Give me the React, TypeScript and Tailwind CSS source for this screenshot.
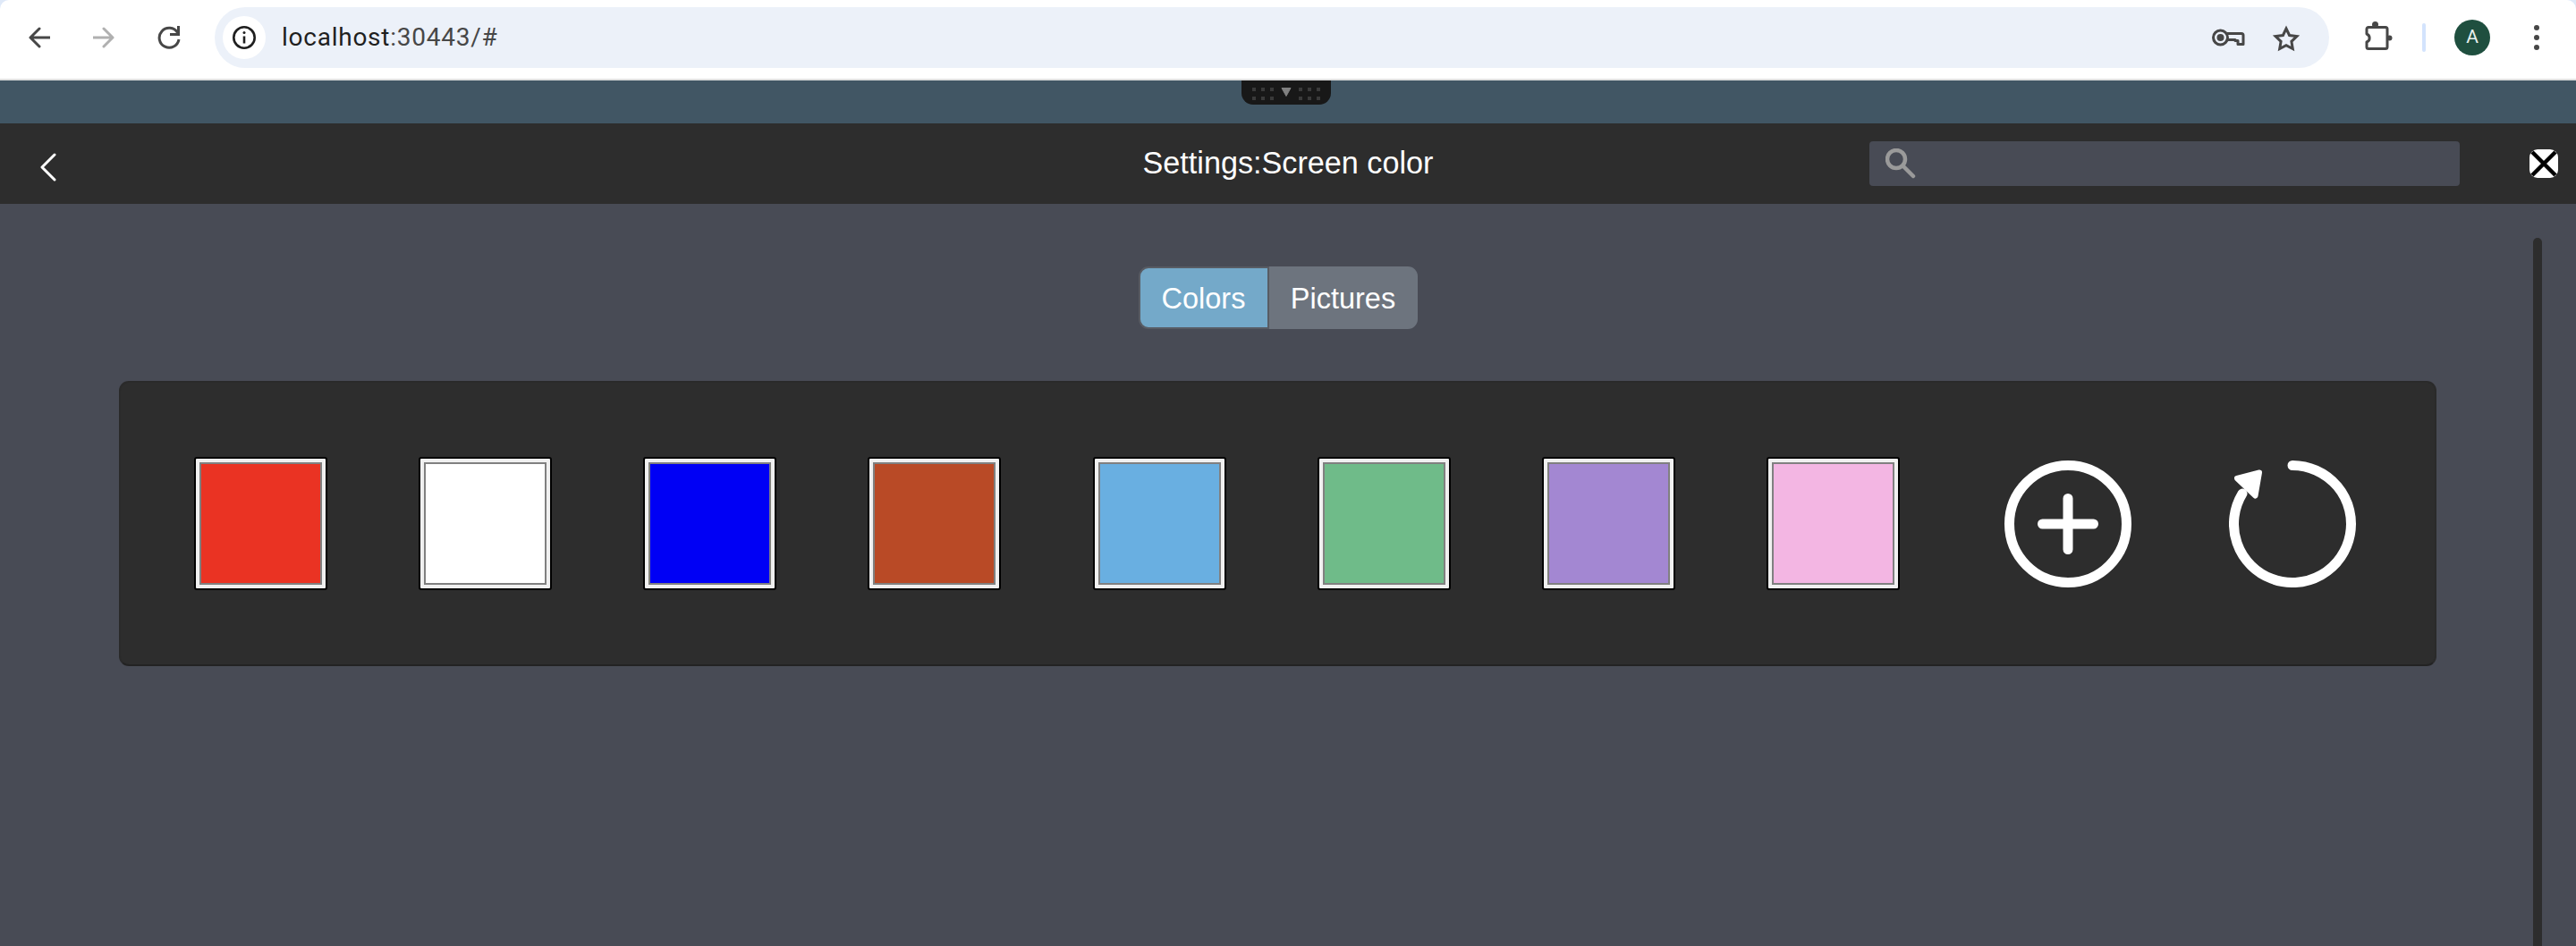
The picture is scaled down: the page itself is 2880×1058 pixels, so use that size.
const swatches = ["#ea3323", "#ffffff", "#0000f5", "#b94a26", "#69afe1", "#6fbb89", "#a387d2", "#f3b6e3"];

function BrowserBar() {
  return (
    <div className="h-[90px] shrink-0 bg-[#dfe9f8]">
      <div className="h-[90px] rounded-t-[10px] border-b-2 border-[#e0e0e0] bg-white">
        <div className="flex h-[84px] w-full items-center">
          <svg width="24" height="24" viewBox="0 0 24 24" fill="none" stroke="#474747" strokeWidth="3" strokeLinecap="round" strokeLinejoin="round" className="ml-[32px]">
            <path d="M24 12H2M12 2 2 12l10 10" />
          </svg>
          <svg width="24" height="24" viewBox="0 0 24 24" fill="none" stroke="#b0b0b0" strokeWidth="3" strokeLinecap="round" strokeLinejoin="round" className="ml-[48px]">
            <path d="M0 12h22M12 2l10 10-10 10" />
          </svg>
          <svg width="26" height="26" viewBox="0 0 26 26" fill="none" stroke="#474747" strokeWidth="3" className="ml-[48px]">
            <path d="M22.500 7.500A11 11 0 1 0 24 15" />
            <path d="M23.500 0v9.500H14" />
          </svg>
          <div className="ml-[38px] flex h-[68px] w-[2364px] items-center rounded-full bg-[#ecf1f9] pl-[9px]">
            <div className="flex h-[48px] w-[48px] items-center justify-center rounded-full bg-white">
              <svg width="28" height="28" viewBox="0 0 28 28" fill="none" stroke="#1f1f1f" strokeWidth="2.600">
                <circle cx="14" cy="14" r="11.700" />
                <path d="M14 12.500v8" />
                <circle cx="14" cy="8.500" r="1.500" fill="#1f1f1f" stroke="none" />
              </svg>
            </div>
            <span className="ml-[18px] font-['Roboto',sans-serif] text-[28px] tracking-[0.75px] text-[#474747]">
              <span className="text-[#1f1f1f]">localhost</span>:30443/#
            </span>
            <svg width="38" height="22" viewBox="0 0 38 22" fill="none" stroke="#474747" strokeWidth="3" strokeLinejoin="round" className="ml-auto">
              <circle cx="10.500" cy="11" r="8" />
              <circle cx="10.500" cy="11" r="4" fill="#474747" stroke="none" />
              <path d="M18 6.500h16a2 2 0 0 1 2 2v10h-6v-4h-3v-1H18" />
            </svg>
            <svg width="32" height="31" viewBox="0 0 32 31" fill="none" stroke="#474747" strokeWidth="3" className="ml-[30px] mr-[32px]">
              <path d="M16 5 19.600 12.500 27.900 13.600 21.900 19.400 23.300 27.600 16 23.700 8.700 27.600 10.100 19.400 4.100 13.600 12.400 12.500z" />
            </svg>
          </div>
          <svg width="36" height="36" viewBox="0 0 36 36" fill="none" stroke="#474747" strokeWidth="3" strokeLinejoin="round" className="ml-[38px]">
            <path d="M6 6.500H25a2 2 0 0 1 2 2V28.500a2 2 0 0 1-2 2H6a2 2 0 0 1-2-2V23a4.800 4.800 0 0 0 0-9V8.500a2 2 0 0 1 2-2z" />
            <circle cx="13.500" cy="3.500" r="3.500" fill="#474747" stroke="none" />
            <circle cx="29.500" cy="18.500" r="3" fill="#474747" stroke="none" />
          </svg>
          <div className="ml-[30px] h-[32px] w-[4px] rounded-full bg-[#d3e3fd]" />
          <div className="ml-[32px] flex h-[40px] w-[40px] items-center justify-center rounded-full bg-[#1f4f3f] font-['Roboto',sans-serif] text-[21px] text-[#e8f0ee]">A</div>
          <div className="ml-[49px] flex flex-col gap-[5px]">
            <span className="h-[6px] w-[6px] rounded-full bg-[#474747]" />
            <span className="h-[6px] w-[6px] rounded-full bg-[#474747]" />
            <span className="h-[6px] w-[6px] rounded-full bg-[#474747]" />
          </div>
        </div>
      </div>
    </div>
  );
}

function DockHandle() {
  return (
    <div className="flex h-[48px] shrink-0 justify-center bg-[#415664]">
      <div className="ml-[-4px] flex h-[27px] w-[100px] items-start justify-center gap-[6px] rounded-b-[13px] bg-[#181818] pt-[8px]">
        <Dots />
        <svg width="12" height="10" viewBox="0 0 12 10" className="mx-[2px]">
          <path d="M1 0.500h10L6 9.500z" fill="#808080" stroke="#808080" strokeLinejoin="round" />
        </svg>
        <Dots />
      </div>
    </div>
  );
}

function Dots() {
  return (
    <div className="grid grid-cols-3 gap-x-[6px] gap-y-[6px]">
      {[0, 1, 2, 3, 4, 5].map((i) => (
        <span key={i} className="h-[4px] w-[4px] bg-[#3a3a3a]" />
      ))}
    </div>
  );
}

function Header() {
  return (
    <div className="grid h-[90px] shrink-0 grid-cols-[1fr_auto_1fr] items-center bg-[#2d2d2d] font-['Liberation_Sans',Arial,sans-serif]">
      <div className="pl-[44px] pt-[8px]">
        <svg width="20" height="32" viewBox="0 0 20 32" fill="none" stroke="#ffffff" strokeWidth="3" strokeLinecap="round" strokeLinejoin="round" className="block">
          <path d="M17 2 3 16l14 14" />
        </svg>
      </div>
      <div className="text-[34.2px] text-white">Settings:Screen color</div>
      <div className="flex items-center justify-end pr-[20px]">
        <div className="flex h-[50px] w-[660px] items-center rounded-[4px] bg-[#484b55] pl-[18px]">
          <svg width="34" height="34" viewBox="0 0 34 34" fill="none" stroke="#9a9a9a" strokeWidth="4.500" strokeLinecap="round">
            <circle cx="12" cy="12" r="10" />
            <path d="M20 20l11 11" />
          </svg>
        </div>
        <svg width="32" height="32" viewBox="0 0 32 32" className="ml-[78px]">
          <rect width="32" height="32" rx="9" fill="#ffffff" />
          <path d="M3 3l26 26M29 3 3 29" stroke="#000000" strokeWidth="4.500" />
        </svg>
      </div>
    </div>
  );
}

function Tabs() {
  return (
    <div className="flex font-['Liberation_Sans',Arial,sans-serif] text-[32.5px] text-white">
      <div className="flex h-[70px] w-[146px] items-center justify-center rounded-l-[11px] border-2 border-[#585c64] bg-[#74a9c9] pt-[3px]">Colors</div>
      <div className="flex h-[70px] w-[166px] items-center justify-center rounded-r-[11px] bg-[#6d747e] pt-[3px]">Pictures</div>
    </div>
  );
}

function Swatch({ color }: { color: string }) {
  return (
    <div className="h-[149px] w-[149px] shrink-0 rounded-[3px] border-2 border-black bg-[#f0f0f0] p-[4px]">
      <div className="h-full w-full border-2 border-[#808080]" style={{ backgroundColor: color }} />
    </div>
  );
}

export default function App() {
  return (
    <div className="flex h-[1058px] flex-col overflow-hidden bg-[#484b55]">
      <BrowserBar />
      <DockHandle />
      <Header />
      <div className="flex min-h-0 flex-1">
        <div className="ml-[133px] w-[2591px]">
          <div className="flex justify-center pt-[70px]">
            <Tabs />
          </div>
          <div className="mt-[58px] flex h-[319px] items-center gap-[102.140px] rounded-[11px] border-2 border-[#2a2a2a] border-b-[#232323] bg-[#2d2d2d] pl-[82px]">
            {swatches.map((c) => (
              <Swatch key={c} color={c} />
            ))}
            <svg width="142" height="142" viewBox="0 0 142 142" fill="none" stroke="#ffffff" strokeWidth="11" strokeLinecap="round" className="ml-[15px] shrink-0">
              <circle cx="71" cy="71" r="65.500" />
              <path d="M71 42.500v57M42.500 71h57" />
            </svg>
            <svg width="142" height="142" viewBox="0 0 142 142" fill="none" stroke="#ffffff" strokeWidth="11" strokeLinecap="round" className="ml-[7px] shrink-0">
              <path d="M71 5.500A65.500 65.500 0 1 1 15 37" />
              <path d="M34 13.500 9 20l20.500 19.500z" fill="#ffffff" stroke="#ffffff" strokeWidth="6" strokeLinejoin="round" />
            </svg>
          </div>
        </div>
        <div className="ml-[108px] mt-[38px] w-[10px] rounded-t-full bg-[#2d2d2d]" />
      </div>
    </div>
  );
}
